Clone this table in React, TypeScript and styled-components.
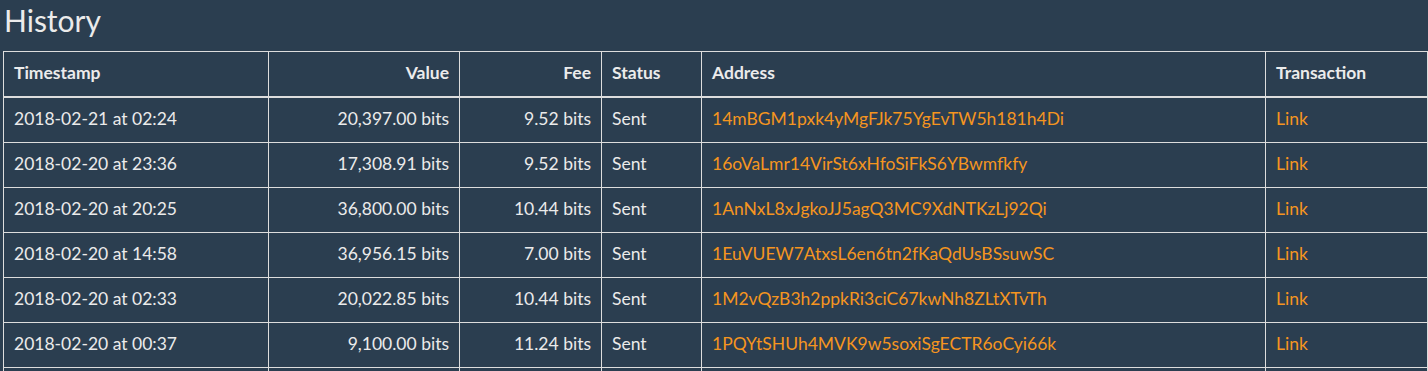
import React from 'react';
import styled, { createGlobalStyle } from 'styled-components';

const GlobalStyle = createGlobalStyle`
	html, body {
		margin: 0;
		padding: 0;
		background: #2b3e50;
	}
	body {
		font-family: Lato, 'Liberation Sans', sans-serif;
		color: #ebebeb;
		font-size: 17.5px;
		line-height: 24px;
	}
`;

const Page = styled.div`
	padding: 2px 0 0 3px;
`;

const Title = styled.h2`
	margin: 0 0 13px 1px;
	font-size: 30px;
	font-weight: 400;
	line-height: 1.2;
	color: #ebebeb;
`;

const Table = styled.table`
	width: 100%;
	border-collapse: collapse;
	table-layout: fixed;
`;

const HeadCell = styled.th<{ right?: boolean; width?: number }>`
	${(p) => (p.width ? `width: ${p.width}px;` : '')}
	padding: 9px 10px 11px;
	text-align: ${(p) => (p.right ? 'right' : 'left')};
	font-weight: 700;
	border: 1px solid #dddddd;
	border-bottom-width: 2px;
	vertical-align: bottom;
`;

const Cell = styled.td<{ right?: boolean }>`
	padding: 9px 10px 11px;
	text-align: ${(p) => (p.right ? 'right' : 'left')};
	border: 1px solid #dddddd;
	white-space: nowrap;
`;

const Link = styled.a`
	color: #f5951f;
	text-decoration: none;
`;

type Row = {
	time: string;
	value: string;
	fee: string;
	status: string;
	address: string;
};

const rows: Row[] = [
	{ time: '2018-02-21 at 02:24', value: '20,397.00 bits', fee: '9.52 bits', status: 'Sent', address: '14mBGM1pxk4yMgFJk75YgEvTW5h181h4Di' },
	{ time: '2018-02-20 at 23:36', value: '17,308.91 bits', fee: '9.52 bits', status: 'Sent', address: '16oVaLmr14VirSt6xHfoSiFkS6YBwmfkfy' },
	{ time: '2018-02-20 at 20:25', value: '36,800.00 bits', fee: '10.44 bits', status: 'Sent', address: '1AnNxL8xJgkoJJ5agQ3MC9XdNTKzLj92Qi' },
	{ time: '2018-02-20 at 14:58', value: '36,956.15 bits', fee: '7.00 bits', status: 'Sent', address: '1EuVUEW7AtxsL6en6tn2fKaQdUsBSsuwSC' },
	{ time: '2018-02-20 at 02:33', value: '20,022.85 bits', fee: '10.44 bits', status: 'Sent', address: '1M2vQzB3h2ppkRi3ciC67kwNh8ZLtXTvTh' },
	{ time: '2018-02-20 at 00:37', value: '9,100.00 bits', fee: '11.24 bits', status: 'Sent', address: '1PQYtSHUh4MVK9w5soxiSgECTR6oCyi66k' },
	{ time: '2018-02-19 at 21:10', value: '12,450.00 bits', fee: '9.52 bits', status: 'Sent', address: '1KfZRq8hX3vNwT2mJpLc7sBdYe4UoAg5Hn' },
];

export default function App() {
	return (
		<Page>
			<GlobalStyle />
			<Title>History</Title>
			<Table>
				<thead>
					<tr>
						<HeadCell width={244}>Timestamp</HeadCell>
						<HeadCell width={170} right>Value</HeadCell>
						<HeadCell width={121} right>Fee</HeadCell>
						<HeadCell width={79}>Status</HeadCell>
						<HeadCell width={543}>Address</HeadCell>
						<HeadCell>Transaction</HeadCell>
					</tr>
				</thead>
				<tbody>
					{rows.map((r) => (
						<tr key={r.address}>
							<Cell>{r.time}</Cell>
							<Cell right>{r.value}</Cell>
							<Cell right>{r.fee}</Cell>
							<Cell>{r.status}</Cell>
							<Cell>
								<Link href="#">{r.address}</Link>
							</Cell>
							<Cell>
								<Link href="#">Link</Link>
							</Cell>
						</tr>
					))}
				</tbody>
			</Table>
		</Page>
	);
}
